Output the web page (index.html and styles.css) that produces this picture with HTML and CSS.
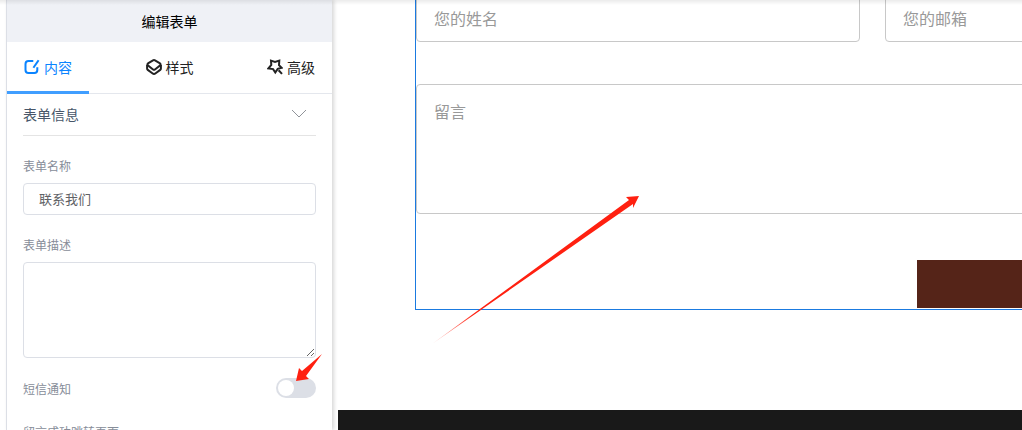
FILE: index.html
```html
<!DOCTYPE html>
<html lang="zh-CN">
<head>
<meta charset="utf-8">
<meta name="viewport" content="width=device-width, initial-scale=1">
<title>编辑表单</title>
<link rel="stylesheet" href="styles.css">
</head>
<body>
<div class="editor">
  <aside class="panel">
    <h1 class="panel-title">编辑表单</h1>
    <nav class="tabs">
      <button class="tab tab-active" type="button">
        <svg class="tab-icon" viewBox="0 0 16 16" aria-hidden="true"><path d="M9.300 1.900H4.500Q1.500 1.900 1.500 4.900V11.100Q1.500 14.100 4.500 14.100H10.300Q13.300 14.100 13.300 11.100V8.200"/><path d="M14.600 1.200L9.400 8.800"/></svg>
        <span>内容</span>
      </button>
      <button class="tab" type="button">
        <svg class="tab-icon" viewBox="0 0 16 16" aria-hidden="true"><path d="M7 1.400Q8 0.800 9 1.400L14 4.400Q15 5.300 14.200 6.400L9 10.500Q8 11.200 7 10.500L1.800 6.400Q1 5.300 2 4.400Z"/><path d="M1.100 6V9.500Q1.100 10.300 1.800 10.900L7 14.700Q8 15.300 9 14.700L14.200 10.900Q14.900 10.300 14.900 9.500V6"/></svg>
        <span>样式</span>
      </button>
      <button class="tab" type="button">
        <svg class="tab-icon" viewBox="0 0 16 16" aria-hidden="true"><path d="M4 1.600L8 3L12.300 1.600L12 6.100L14.600 8.800L10.700 9.900L8.300 13.500L6.100 10.100L1.400 9.400L4.300 6Z"/><path d="M11.600 11.300L15 14.900"/></svg>
        <span>高级</span>
      </button>
    </nav>
    <div class="panel-body">
      <button class="section" type="button" aria-expanded="true">
        <span>表单信息</span>
        <svg class="chevron" viewBox="0 0 16 10" aria-hidden="true"><path d="M1 1L8 8L15 1"/></svg>
      </button>
      <div class="field">
        <label class="label" for="form-name">表单名称</label>
        <input class="text-input" id="form-name" type="text" value="联系我们">
      </div>
      <div class="field">
        <label class="label" for="form-desc">表单描述</label>
        <textarea class="text-area" id="form-desc"></textarea>
      </div>
      <div class="switch-row">
        <label class="label" for="sms">短信通知</label>
        <input class="switch" id="sms" type="checkbox" role="switch">
      </div>
      <p class="label next-label">留言成功跳转页面</p>
    </div>
  </aside>
  <main class="canvas">
    <form class="contact-form">
      <div class="form-row">
        <input class="form-input" type="text" placeholder="您的姓名" aria-label="您的姓名">
        <input class="form-input" type="email" placeholder="您的邮箱" aria-label="您的邮箱">
      </div>
      <textarea class="form-message" placeholder="留言" aria-label="留言"></textarea>
      <button class="submit" type="button" aria-label="提交"></button>
    </form>
    <footer class="site-footer"></footer>
  </main>
</div>
<div class="top-shadow"></div>
<svg class="arrow arrow-long" viewBox="0 0 208 148" aria-hidden="true">
  <defs><linearGradient id="fade" x1="0" y1="1" x2="1" y2="0"><stop offset="0" stop-color="#ff2010" stop-opacity="0.200"/><stop offset="0.200" stop-color="#ff2010"/></linearGradient></defs>
  <path fill="url(#fade)" d="M0 148L197 4L194 1L207 0L201 12L201 8Z"/>
</svg>
<svg class="arrow arrow-short" viewBox="0 0 28 30" aria-hidden="true">
  <path fill="#ff2010" d="M27 1L11 23L14 26L1 28L4 15L7 18Z"/>
</svg>
</body>
</html>
```
FILE: styles.css
```css
* {
  box-sizing: border-box;
}

body {
  margin: 0;
  height: 100vh;
  overflow: hidden;
  background: #fff;
  font-family: "Noto Sans CJK SC", sans-serif;
  font-size: 14px;
}

button,
input,
textarea {
  margin: 0;
  font-family: inherit;
}

.editor {
  display: flex;
  gap: 6px;
  height: 100%;
  padding-left: 6px;
}

.panel {
  flex: 0 0 326px;
  overflow: hidden;
  border-left: 1px solid #dcdfe6;
  background: #fff;
  box-shadow: 2px 0 4px rgba(0, 0, 0, 0.16);
}

.panel-title {
  margin: 0;
  background: #eff1f6;
  color: #000;
  font-size: 14px;
  font-weight: 400;
  line-height: 42px;
  text-align: center;
}

.tabs {
  display: flex;
  justify-content: space-between;
  height: 52px;
  border-bottom: 1px solid #e4e7ed;
}

.tab {
  display: flex;
  align-items: center;
  gap: 4px;
  height: 52px;
  padding: 0 17px;
  border: 0;
  border-bottom: 3px solid transparent;
  background: none;
  color: #222;
  font-size: 14px;
}

.tab-active {
  border-bottom-color: #409eff;
  color: #0a84ff;
}

.tab-icon {
  width: 16px;
  height: 16px;
  fill: none;
  stroke: currentColor;
  stroke-width: 2;
}

.panel-body {
  padding: 0 16px;
}

.section {
  display: flex;
  align-items: center;
  justify-content: space-between;
  width: 100%;
  height: 42px;
  padding: 0 9px 2px 0;
  border: 0;
  border-bottom: 1px solid #e4e4e4;
  background: none;
  color: #475669;
  font-size: 14px;
}

.chevron {
  width: 16px;
  height: 10px;
  fill: none;
  stroke: #909399;
}

.field {
  display: flex;
  flex-direction: column;
  gap: 8px;
  padding-top: 20px;
}

.label {
  color: #878d99;
  font-size: 12px;
  line-height: 19px;
}

.text-input,
.text-area {
  width: 100%;
  border: 1px solid #dcdfe6;
  border-radius: 4px;
  background: #fff;
  color: #606266;
  font-size: 13px;
}

.text-input {
  height: 32px;
  padding: 0 15px 2px;
}

.text-area {
  height: 96px;
  padding: 5px 15px;
  resize: vertical;
}

.switch-row {
  display: flex;
  align-items: center;
  justify-content: space-between;
  padding-top: 20px;
}

.switch {
  display: flex;
  align-items: center;
  width: 40px;
  height: 20px;
  padding: 2px;
  border-radius: 10px;
  background: #dcdfe6;
  appearance: none;
}

.switch::before {
  width: 16px;
  height: 16px;
  border-radius: 50%;
  background: #fff;
  content: "";
}

.switch:checked {
  justify-content: flex-end;
  background: #409eff;
}

.next-label {
  margin: 24px 0 0;
}

.canvas {
  display: flex;
  flex: 1;
  flex-direction: column;
  min-width: 0;
  overflow: hidden;
}

.contact-form {
  display: flex;
  flex-direction: column;
  min-width: 915px;
  margin: -5px 77px 100px;
  padding-bottom: 1px;
  border: 1px solid #1a7ae0;
}

.form-row {
  display: grid;
  grid-template-columns: 1fr 1fr;
  gap: 25px;
}

.form-input,
.form-message {
  width: 100%;
  border: 1px solid #c8c8c8;
  border-radius: 4px;
  background: #fff;
  font-size: 16px;
}

.form-input {
  height: 46px;
  padding: 0 17px 2px;
}

.form-message {
  height: 130px;
  margin-top: 42px;
  padding: 14px 17px;
  resize: none;
}

.form-input::placeholder,
.form-message::placeholder {
  color: #999;
}

.submit {
  align-self: flex-end;
  width: 412px;
  height: 48px;
  margin-top: 46px;
  border: 0;
  background: #552418;
}

.site-footer {
  flex: 1;
  background: #191919;
}

.top-shadow {
  position: absolute;
  top: 0;
  right: 0;
  left: 0;
  height: 5px;
  background: linear-gradient(rgba(0, 0, 0, 0.08), transparent);
  pointer-events: none;
}

.arrow {
  position: absolute;
  pointer-events: none;
}

.arrow-long {
  top: 196px;
  left: 432px;
  width: 208px;
  height: 148px;
}

.arrow-short {
  top: 353px;
  left: 295px;
  width: 28px;
  height: 30px;
}
```
